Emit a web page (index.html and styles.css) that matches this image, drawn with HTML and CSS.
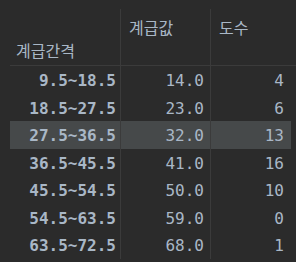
FILE: index.html
```html
<!DOCTYPE html>
<html>
<head>
<meta charset="utf-8">
<link rel="stylesheet" href="styles.css">
</head>
<body>
<div class="frame">
  <div class="head">
    <div class="hcell hidx">계급간격</div>
    <div class="hcell hcol c2">계급값</div>
    <div class="hcell hcol c3">도수</div>
  </div>
  <div class="rows">
    <div class="row"><div class="cell idx">9.5~18.5</div><div class="cell val c2">14.0</div><div class="cell val c3">4</div></div>
    <div class="row"><div class="cell idx">18.5~27.5</div><div class="cell val c2">23.0</div><div class="cell val c3">6</div></div>
    <div class="row sel"><div class="cell idx">27.5~36.5</div><div class="cell val c2">32.0</div><div class="cell val c3">13</div></div>
    <div class="row"><div class="cell idx">36.5~45.5</div><div class="cell val c2">41.0</div><div class="cell val c3">16</div></div>
    <div class="row"><div class="cell idx">45.5~54.5</div><div class="cell val c2">50.0</div><div class="cell val c3">10</div></div>
    <div class="row"><div class="cell idx">54.5~63.5</div><div class="cell val c2">59.0</div><div class="cell val c3">0</div></div>
    <div class="row"><div class="cell idx">63.5~72.5</div><div class="cell val c2">68.0</div><div class="cell val c3">1</div></div>
  </div>
</div>
</body>
</html>
```
FILE: styles.css
```css
html, body {
  margin: 0;
  padding: 0;
  background: #2b2b2b;
  width: 296px;
  height: 262px;
  overflow: hidden;
}
.frame {
  padding: 9px 0 0 10px;
  color: #a9b7c6;
}
.head {
  display: grid;
  grid-template-columns: 110px 90px 76px;
  height: 56px;
  border-bottom: 1px solid #3b3b3b;
  font-family: "Noto Sans CJK KR", "Noto Sans", sans-serif;
  font-size: 16px;
  line-height: 20px;
}
.hcell {
  display: flex;
  box-sizing: border-box;
}
.hidx {
  align-items: flex-end;
  padding: 0 0 5px 6px;
}
.hcol {
  align-items: flex-start;
  padding: 8px 0 0 8px;
  border-left: 1px solid #3b3b3b;
}
.rows {
  width: 281px;
}
.row {
  display: grid;
  grid-template-columns: 110px 90px 81px;
  height: 27.5px;
  font-family: "DejaVu Sans Mono", "Liberation Mono", monospace;
  font-size: 16px;
}
.row.sel {
  background: #46494a;
}
.cell {
  display: flex;
  align-items: center;
  justify-content: flex-end;
  box-sizing: border-box;
  padding-top: 2px;
}
.idx {
  font-weight: bold;
  padding-right: 4px;
}
.val {
  border-left: 1px solid #3b3b3b;
  padding-right: 6px;
}
.c3.val {
  padding-right: 7px;
}
```
